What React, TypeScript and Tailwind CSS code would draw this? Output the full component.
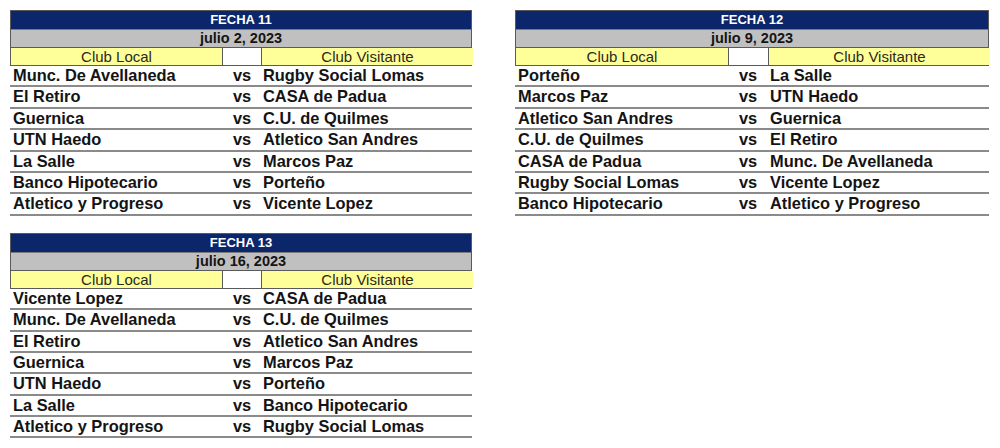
import React from "react";

type Match = [string, string];

const t11: Match[] = [
  ["Munc. De Avellaneda", "Rugby Social Lomas"],
  ["El Retiro", "CASA de Padua"],
  ["Guernica", "C.U. de Quilmes"],
  ["UTN Haedo", "Atletico San Andres"],
  ["La Salle", "Marcos Paz"],
  ["Banco Hipotecario", "Porteño"],
  ["Atletico y Progreso", "Vicente Lopez"],
];
const t12: Match[] = [
  ["Porteño", "La Salle"],
  ["Marcos Paz", "UTN Haedo"],
  ["Atletico San Andres", "Guernica"],
  ["C.U. de Quilmes", "El Retiro"],
  ["CASA de Padua", "Munc. De Avellaneda"],
  ["Rugby Social Lomas", "Vicente Lopez"],
  ["Banco Hipotecario", "Atletico y Progreso"],
];
const t13: Match[] = [
  ["Vicente Lopez", "CASA de Padua"],
  ["Munc. De Avellaneda", "C.U. de Quilmes"],
  ["El Retiro", "Atletico San Andres"],
  ["Guernica", "Marcos Paz"],
  ["UTN Haedo", "Porteño"],
  ["La Salle", "Banco Hipotecario"],
  ["Atletico y Progreso", "Rugby Social Lomas"],
];

function Table({
  fecha,
  date,
  matches,
  wide,
}: {
  fecha: string;
  date: string;
  matches: Match[];
  wide?: boolean;
}) {
  const cols = wide ? "grid-cols-[213px_40px_221px]" : "grid-cols-[212px_39px_211px]";
  const width = wide ? "w-[474px]" : "w-[462px]";
  return (
    <div className={`${width} shrink-0`}>
      <div className="border border-[#5a5a5a]">
        <div className="h-[18px] bg-[#0b266a] text-white text-center font-bold text-[13px] leading-[18px]">
          {fecha}
        </div>
        <div className="h-[18px] bg-[#c0c0c0] border-t border-[#7a7a7a] text-center font-bold text-[14.5px] leading-[17px] text-[#151515]">
          {date}
        </div>
        <div className={`grid ${cols} h-[18px] border-t border-[#5a5a5a] text-[15px] leading-[17px] text-[#2a2a1a]`}>
          <div className="bg-[#ffff99] border-r border-[#5a5a5a] text-center">Club Local</div>
          <div className="bg-white border-r border-[#5a5a5a]"></div>
          <div className="bg-[#ffff99] text-center">Club Visitante</div>
        </div>
      </div>
      {matches.map(([a, b], i) => (
        <div
          key={i}
          className={`grid ${cols} h-[21.4px] border-b-2 border-[#8a8a8a] font-bold text-[16.4px] leading-[19px] text-[#141414]`}
        >
          <div className="pl-[3px] whitespace-nowrap">{a}</div>
          <div className="pl-[11px]">vs</div>
          <div className="pl-[2px] whitespace-nowrap">{b}</div>
        </div>
      ))}
    </div>
  );
}

export default function App() {
  return (
    <div
      className="w-[1000px] h-[448px] bg-white overflow-hidden pt-[10px] pl-[10px]"
      style={{ fontFamily: '"Liberation Sans", Arial, sans-serif' }}
    >
      <div className="flex gap-[43px]">
        <Table fecha="FECHA 11" date="julio 2, 2023" matches={t11} />
        <Table fecha="FECHA 12" date="julio 9, 2023" matches={t12} wide />
      </div>
      <div className="mt-[17px]">
        <Table fecha="FECHA 13" date="julio 16, 2023" matches={t13} />
      </div>
    </div>
  );
}
